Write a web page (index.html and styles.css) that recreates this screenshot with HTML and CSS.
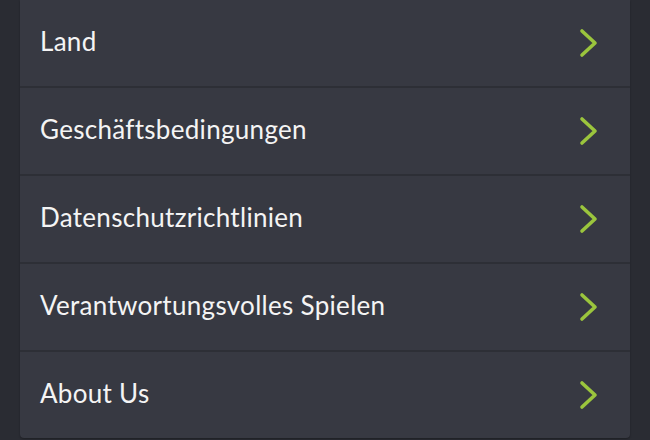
FILE: index.html
```html
<!DOCTYPE html>
<html lang="de">
<head>
<meta charset="utf-8">
<link rel="stylesheet" href="styles.css">
</head>
<body>
<ul class="menu">
  <li class="row"><span class="label">Land</span><svg class="chev" viewBox="0 0 22 32"><path d="M4 4 L17 16 L4 28"/></svg></li>
  <li class="row"><span class="label">Geschäftsbedingungen</span><svg class="chev" viewBox="0 0 22 32"><path d="M4 4 L17 16 L4 28"/></svg></li>
  <li class="row"><span class="label">Datenschutzrichtlinien</span><svg class="chev" viewBox="0 0 22 32"><path d="M4 4 L17 16 L4 28"/></svg></li>
  <li class="row"><span class="label">Verantwortungsvolles Spielen</span><svg class="chev" viewBox="0 0 22 32"><path d="M4 4 L17 16 L4 28"/></svg></li>
  <li class="row"><span class="label">About Us</span><svg class="chev" viewBox="0 0 22 32"><path d="M4 4 L17 16 L4 28"/></svg></li>
</ul>
</body>
</html>
```
FILE: styles.css
```css
html, body {
  margin: 0;
  padding: 0;
  background: #2a2c33;
  height: 100%;
  overflow: hidden;
}
.menu {
  list-style: none;
  margin: 0 20px;
  padding: 0;
  background: #373942;
  border-radius: 0 0 4px 4px;
  box-shadow: 0 1px 2px rgba(0,0,0,0.3);
}
.row {
  display: flex;
  align-items: center;
  justify-content: space-between;
  height: 86px;
  padding: 0 30px 0 20px;
  border-bottom: 2px solid #2d2f36;
}
.row:last-child {
  border-bottom: none;
}
.label {
  font-family: "Lato", "Open Sans", sans-serif;
  font-size: 26px;
  color: #f4f4f4;
  letter-spacing: 0.3px;
  margin-bottom: 4px;
}
.chev {
  width: 22px;
  height: 32px;
  margin-bottom: 1px;
  fill: none;
  stroke: #9bc53d;
  stroke-width: 3.6;
  stroke-linecap: round;
  stroke-linejoin: round;
}
```
